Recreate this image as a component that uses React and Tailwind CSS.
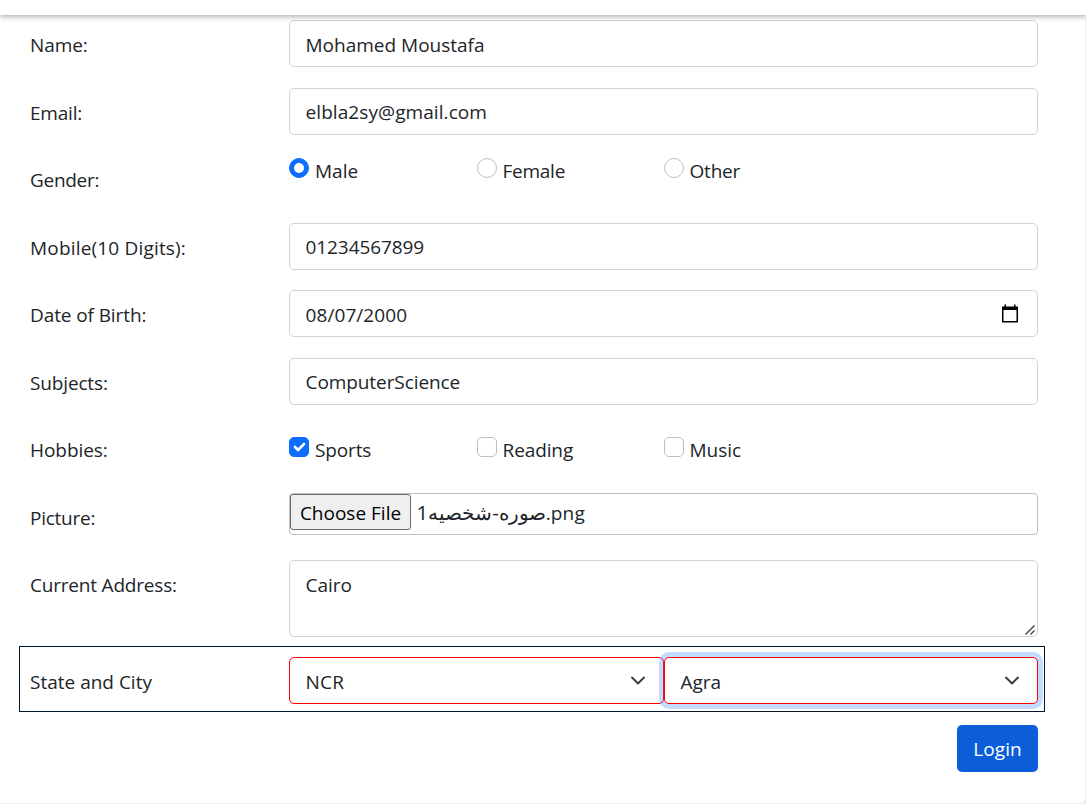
import React from "react";

function Row({ label, height = "h-[67px]", spacing = "", children }) {
  return (
    <div className={`flex items-start ${height}`}>
      <div className={`w-[259px] shrink-0 pt-[10px] leading-[30px] whitespace-nowrap ${spacing}`}>{label}</div>
      <div className="flex w-[749px] shrink-0">{children}</div>
    </div>
  );
}

function Field({ children, pad = "pt-[9px]", spacing = "", className = "" }) {
  return (
    <div className={`flex h-[47px] w-full items-start justify-between rounded-[5px] border border-[#ced4da] bg-white pl-[15.5px] leading-[30px] ${pad} ${spacing} ${className}`}>
      {children}
    </div>
  );
}

function Choice({ type, label, checked, width = "w-[187px]", gap = "ml-[6px]", spacing = "" }) {
  const shape = type === "radio" ? "rounded-full" : "rounded-[5px]";
  const fill = checked ? "border-[#0d6efd] bg-[#0d6efd]" : "border-[#bfbfbf] bg-white";
  return (
    <label className={`flex items-start ${width}`}>
      <span className={`flex size-5 shrink-0 items-center justify-center border ${shape} ${fill}`}>
        {checked && type === "radio" && <span className="size-[10px] rounded-full bg-white" />}
        {checked && type === "checkbox" && (
          <svg viewBox="0 0 20 20" className="size-5 shrink-0">
            <path d="M6 10l3 3 6-6" fill="none" stroke="#fff" strokeWidth="2.6" strokeLinecap="round" strokeLinejoin="round" />
          </svg>
        )}
      </span>
      <span className={`-mt-[2px] leading-[30px] ${gap} ${spacing}`}>{label}</span>
    </label>
  );
}

function Select({ value, focused, spacing = "" }) {
  return (
    <div className={`flex h-[47px] items-start justify-between rounded-[5px] border border-[#ff0000] bg-white pt-[9px] pl-[15.5px] pr-[17px] leading-[30px] ${focused ? "w-[374px] shadow-[0_0_0_5px_rgba(13,110,253,0.25)]" : "w-[375px]"}`}>
      <span className={spacing}>{value}</span>
      <svg viewBox="0 0 16 16" className="mt-[5px] size-4">
        <path d="M2 5.5l6 6 6-6" fill="none" stroke="#343a40" strokeWidth="1.9" strokeLinecap="round" strokeLinejoin="round" />
      </svg>
    </div>
  );
}

export default function App() {
  return (
    <div className="h-[804px] w-[1086px] overflow-hidden bg-[#eee] font-['Open_Sans','Noto_Sans',sans-serif] text-[19px] text-[#212529]">
      <div className="relative z-10 h-[15px] bg-white shadow-[0_2px_5px_rgba(0,0,0,0.3)]" />
      <form className="h-[788px] w-[1085px] rounded-br-[5px] bg-white pt-[5px] pl-[30px]">
        <Row label="Name:" height="h-[68px]" spacing="tracking-[-0.1px]">
          <Field>Mohamed Moustafa</Field>
        </Row>
        <Row label="Email:" spacing="tracking-[-0.2px]">
          <Field pad="pt-[8px]" spacing="tracking-[0.08px]">elbla2sy@gmail.com</Field>
        </Row>
        <Row label="Gender:" height="h-[68px]" spacing="tracking-[-0.3px]">
          <div className="flex pt-[3px]">
            <Choice type="radio" label="Male" checked width="w-[188px]" />
            <Choice type="radio" label="Female" gap="ml-[5.5px]" spacing="tracking-[-0.25px]" />
            <Choice type="radio" label="Other" gap="ml-[5.5px]" spacing="tracking-[-0.2px]" />
          </div>
        </Row>
        <Row label="Mobile(10 Digits):" spacing="tracking-[0.18px]">
          <Field pad="pt-[8px]" spacing="tracking-[-0.08px]">01234567899</Field>
        </Row>
        <Row label="Date of Birth:" height="h-[68px]" spacing="tracking-[-0.1px]">
          <Field className="pr-[18px]" spacing="tracking-[0.08px]">
            <span>08/07/2000</span>
            <svg viewBox="0 0 18 20" className="mt-[4px] h-5 w-[18px]">
              <path d="M1 2.5h16v16H1zM2.5 6v11h13V6z" fill="#000" fillRule="evenodd" />
              <path d="M3.5 0.5h1.5v3H3.5zM13 0.5h1.5v3H13z" fill="#000" />
            </svg>
          </Field>
        </Row>
        <Row label="Subjects:" spacing="tracking-[-0.15px]">
          <Field pad="pt-[8px]" spacing="tracking-[-0.08px]">ComputerScience</Field>
        </Row>
        <Row label="Hobbies:" height="h-[68px]" spacing="tracking-[-0.05px]">
          <div className="flex pt-[12px]">
            <Choice type="checkbox" label="Sports" checked width="w-[188px]" spacing="tracking-[-0.15px]" />
            <Choice type="checkbox" label="Reading" gap="ml-[5.5px]" spacing="tracking-[-0.1px]" />
            <Choice type="checkbox" label="Music" gap="ml-[5.5px]" />
          </div>
        </Row>
        <Row label="Picture:" spacing="tracking-[-0.25px]">
          <div className="flex h-[42px] w-full items-start rounded-[4px] border border-[#bfbfbf]">
            <button type="button" className="h-[36px] w-[121px] rounded-[3px] border border-[#6b6b6b] bg-[#efefef] pt-px leading-[34px] tracking-normal whitespace-nowrap text-black">
              Choose File
            </button>
            <span dir="ltr" className="ml-[5.5px] leading-[36px] tracking-normal">
              <span className="text-[20.4px]">صوره-شخصيه1</span>
              <span className="tracking-[0.25px]">.png</span>
            </span>
          </div>
        </Row>
        <Row label="Current Address:" height="h-[86px]" spacing="tracking-[-0.2px]">
          <div className="flex h-[77px] w-full items-start justify-between rounded-[5px] border border-[#ced4da] pt-[9px] pl-[15.5px] leading-[30px]">
            <span>Cairo</span>
            <svg viewBox="0 0 12 12" className="mr-[1px] size-3 self-end">
              <path d="M1.5 10.5L10.5 1.5M6.5 10.5l4-4" fill="none" stroke="#555" strokeWidth="1.6" />
            </svg>
          </div>
        </Row>
        <div className="-ml-[11px] h-[66px] w-[1026px] border border-[#001529] pt-[10px] pl-[10px]">
          <Row label="State and City" height="h-[47px]">
            <Select value="NCR" spacing="tracking-[0.2px]" />
            <Select value="Agra" focused />
          </Row>
        </div>
        <div className="flex w-[1008px] justify-end pt-[13px]">
          <button type="button" className="h-[47px] w-[81px] rounded-[5px] bg-[#0b5ed7] pt-[2px] leading-[45px] tracking-[0.1px] text-white">
            Login
          </button>
        </div>
      </form>
    </div>
  );
}
